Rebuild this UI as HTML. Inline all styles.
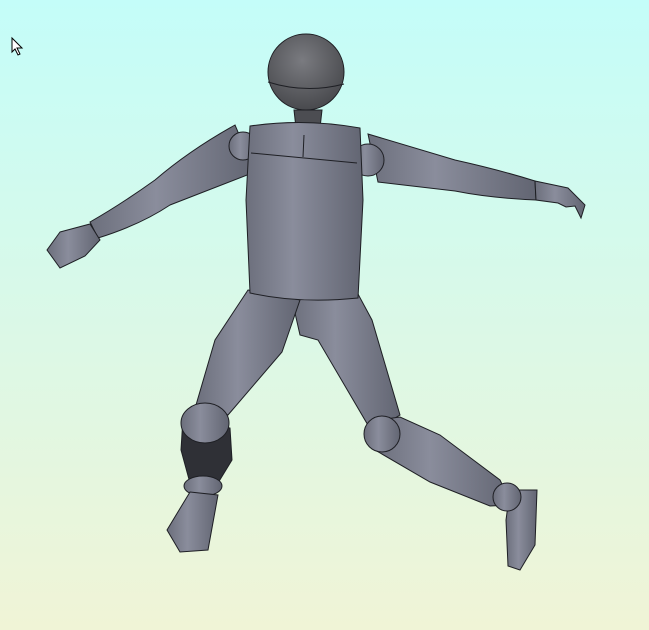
<!DOCTYPE html><html><head><style>html,body{margin:0;padding:0;width:649px;height:630px;overflow:hidden;background:#f0f4d6}body{background:linear-gradient(#c4fdf9,#f0f4d6)}</style></head><body>
<svg width="649" height="630" viewBox="0 0 649 630" style="display:block">
<defs>
<linearGradient id="g" x1="0" y1="0" x2="1" y2="0"><stop offset="0" stop-color="#6c6f7c"/><stop offset="0.4" stop-color="#8a8d9c"/><stop offset="1" stop-color="#626572"/></linearGradient>
<radialGradient id="h" cx="0.45" cy="0.35" r="0.7"><stop offset="0" stop-color="#7a7b80"/><stop offset="1" stop-color="#45464a"/></radialGradient>
</defs>
<path d="M12 38 L12 52 L15 49 L18 55 L20 54 L17 48 L22 48 Z" fill="#fff" stroke="#000" stroke-width="1"/>
<g stroke="#1e1f24" stroke-width="1" fill="url(#g)">
<path d="M235 125 Q190 150 155 180 Q120 205 90 222 L98 238 Q140 225 170 205 L255 172 Z"/>
<path d="M60 232 L90 224 L100 240 L85 256 L60 268 L47 250 Z"/>
<path d="M368 134 L455 160 Q500 170 535 181 L536 200 Q490 198 455 191 L378 182 Z"/>
<path d="M535 181 L568 188 L585 205 L581 218 L575 206 L566 207 L558 203 L536 200 Z"/>
<circle cx="243" cy="146" r="14"/>
<circle cx="368" cy="160" r="16"/>
<path d="M294 110 L322 110 L320 128 L296 128 Z" fill="#4c4d52"/>
<circle cx="306" cy="72" r="38" fill="url(#h)"/>
<path d="M268 82 Q306 94 344 84" fill="none"/>
<path d="M292 300 L358 294 L372 320 L400 415 L372 432 L318 340 L300 335 Z"/>
<path d="M248 290 L300 300 L282 352 L228 415 L196 405 L215 340 Z"/>
<path d="M250 126 Q305 118 360 128 L363 200 L358 298 Q300 304 250 293 L246 200 Z"/>
<path d="M251 153 L357 163 M304 135 L303 157" fill="none"/>
<path d="M183 418 L230 428 L232 460 L218 483 L190 483 L181 450 Z" fill="#2f3036"/>
<ellipse cx="205" cy="423" rx="24" ry="20"/>
<ellipse cx="203" cy="486" rx="19" ry="10"/>
<path d="M190 492 L218 495 L208 550 L180 552 L167 530 Z"/>
<path d="M378 420 L400 417 L440 435 L500 480 L512 505 L490 506 L430 482 L375 450 Z"/>
<circle cx="382" cy="434" r="18"/>
<path d="M510 490 L537 490 L535 545 L520 570 L508 566 L506 520 Z"/>
<circle cx="507" cy="497" r="14"/>
</g>
</svg>
</body></html>
